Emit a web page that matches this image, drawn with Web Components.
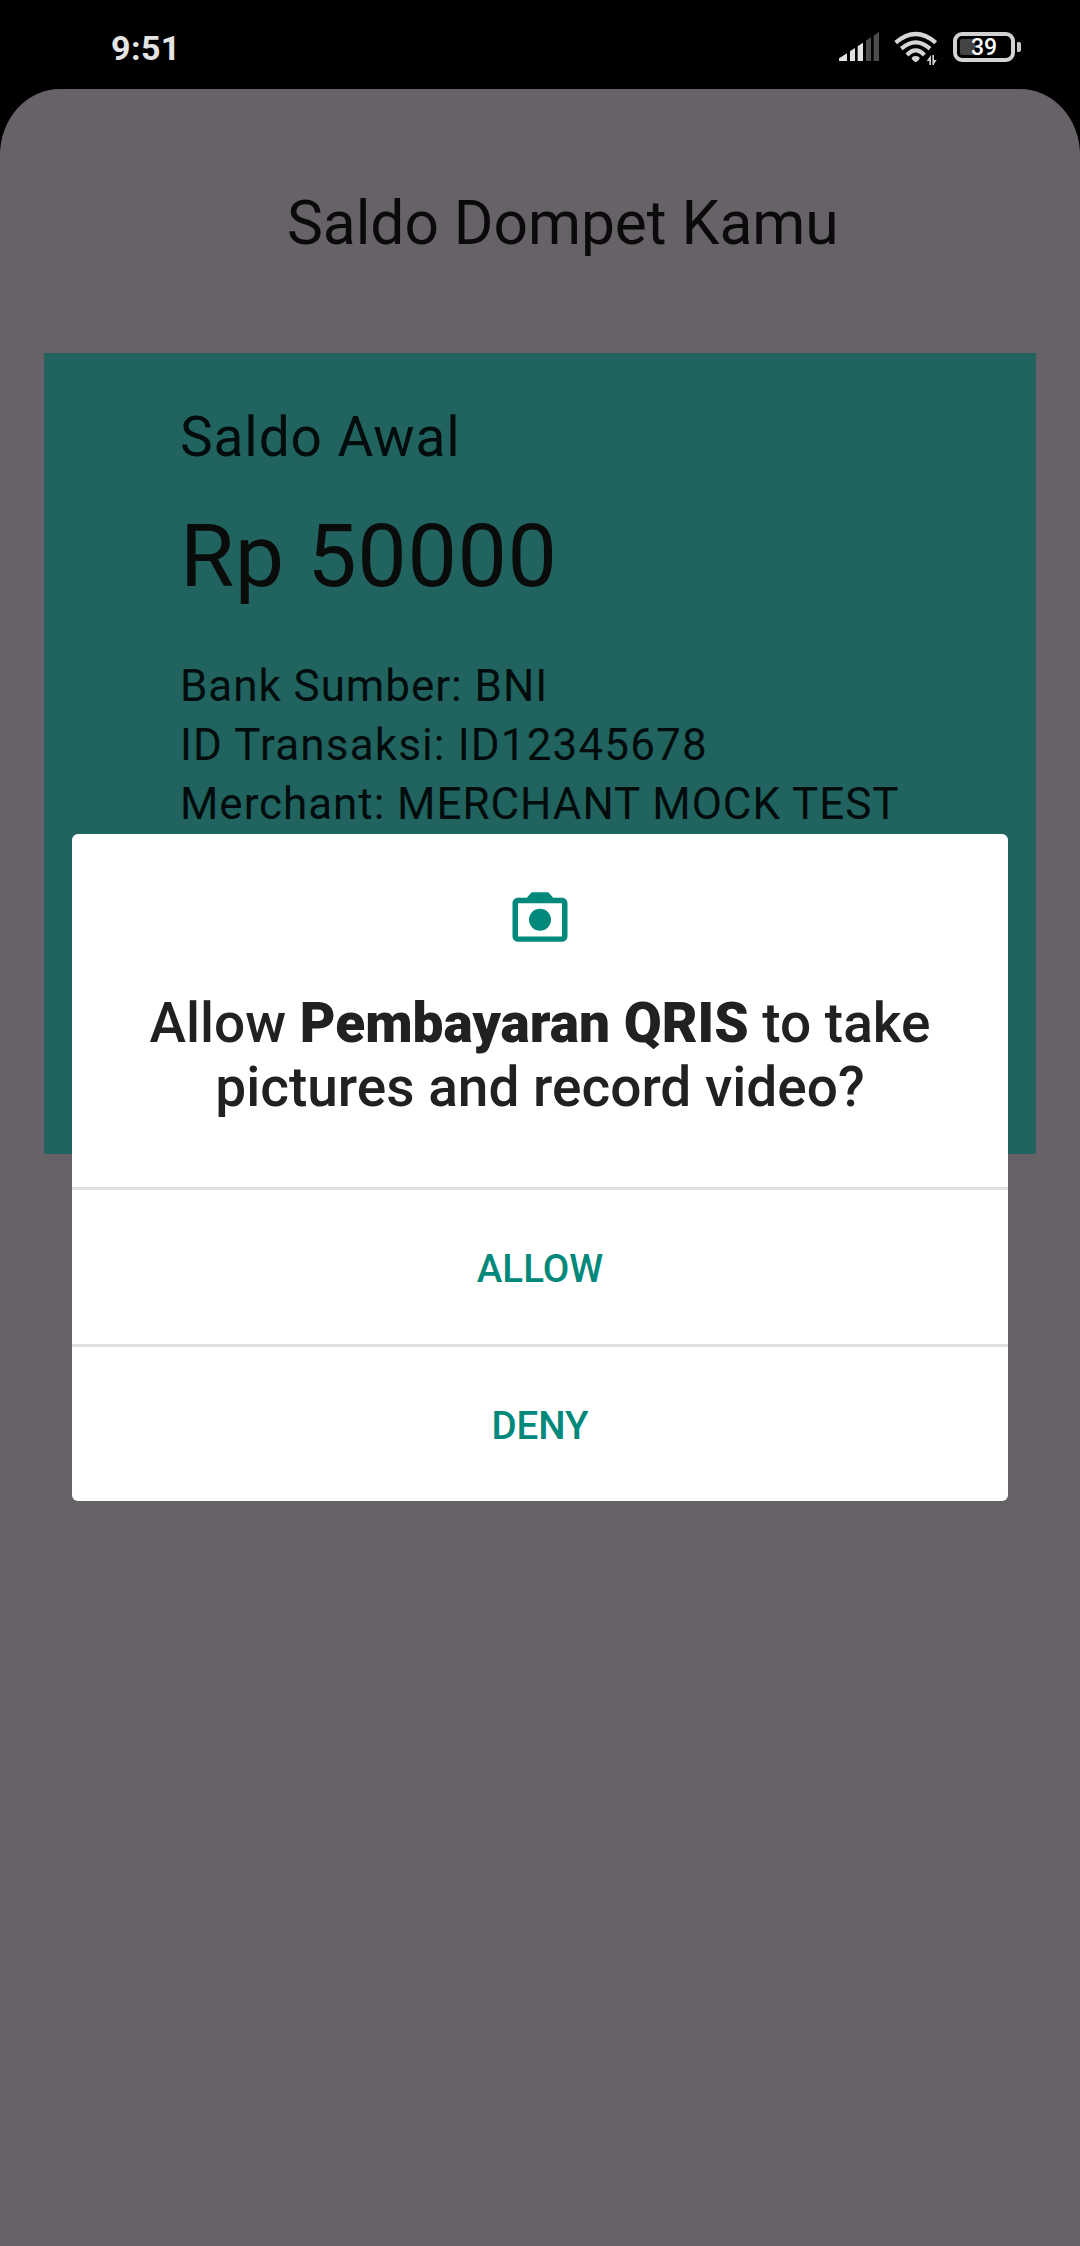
<!DOCTYPE html>
<html lang="id">
<head>
<meta charset="utf-8">
<title>Saldo Dompet Kamu</title>
<style>
html, body { margin: 0; background: #000; }
body { font-family: Roboto, "Liberation Sans", sans-serif; width: 1080px; height: 2246px; overflow: hidden; }
.code { letter-spacing: 1.14px; }
</style>
</head>
<body>
<phone-screen>
  <status-bar slot="status" time="9:51" battery="39"></status-bar>
  <app-page heading="Saldo Dompet Kamu">
    <wallet-card label="Saldo Awal" amount="Rp 50000">
      <div>Bank Sumber: BNI</div>
      <div class="code">ID Transaksi: ID12345678</div>
      <div>Merchant: MERCHANT MOCK TEST</div>
    </wallet-card>
  </app-page>
  <permission-dialog slot="overlay" app="Pembayaran QRIS">
    <dialog-action slot="actions">ALLOW</dialog-action>
    <dialog-action slot="actions">DENY</dialog-action>
  </permission-dialog>
</phone-screen>
<script>
const define = (name, render) => customElements.define(name, class extends HTMLElement {
  constructor() {
    super();
    this.attachShadow({ mode: 'open' }).innerHTML = render(this);
  }
});

define('phone-screen', () => `
<style>
:host { display: flex; flex-direction: column; position: relative; width: 1080px; height: 2246px; background: #000; overflow: hidden; }
main { flex: 1; display: flex; }
.overlay { position: absolute; left: 72px; top: 834px; width: 936px; }
</style>
<slot name="status"></slot>
<main><slot></slot></main>
<div class="overlay"><slot name="overlay"></slot></div>`);

define('status-bar', el => `
<style>
:host { display: flex; box-sizing: border-box; height: 89px; padding: 0 59px 0 111px; justify-content: space-between; color: #e4e4e4; }
.time { font-size: 34px; font-weight: 700; line-height: 40px; padding-top: 28px; letter-spacing: .4px; }
.icons { display: flex; align-items: flex-start; padding-top: 31px; }
svg { display: block; flex: none; }
.wifi { margin-left: 14px; }
.battery { display: flex; margin: 1px 0 0 16px; align-items: center; }
.shell { box-sizing: border-box; width: 62px; height: 30px; border: 4px solid #d2d2d2; border-radius: 9px; display: flex; align-items: center; position: relative; }
.level { width: 15px; height: 16px; margin-left: 3px; background: #444; border-radius: 2px 0 0 2px; }
.pct { position: absolute; inset: 0; text-align: center; font-size: 23px; line-height: 23px; font-weight: 500; color: #fff; }
.tip { width: 4px; height: 10px; margin-left: 2px; border-radius: 1px 2px 2px 1px; background: #c8c8c8; }
</style>
<div class="time">${el.getAttribute('time')}</div>
<div class="icons">
  <svg width="42" height="32" viewBox="54 48 126 96">
    <path fill="#e2e2e2" d="M57 138v-8l24-15v23zM90 138v-29l15-10v39zM113 138v-44l16-11v55z"/>
    <path fill="#4c4c4c" d="M138 138v-61l15-11v72zM161 138v-76l16-12v88z"/>
  </svg>
  <svg class="wifi" width="43" height="34" viewBox="223 48 129 102">
    <g fill="none" stroke="#d6d6d6" stroke-width="12.5">
      <path d="M228 83Q288 31 348 83"/>
      <path d="M245 101Q288 63 331 101"/>
      <path d="M262 120Q288 92 314 120"/>
    </g>
    <path fill="#d6d6d6" d="M276 131q0-8 12-8t12 8q-4 6-12 11q-8-5-12-11z"/>
    <path fill="#d0d0d0" stroke="#000" stroke-width="5" paint-order="stroke" d="M334 120v30h-5v-12h-8zM338 120h5v15h8l-8 12v3h-5z"/>
  </svg>
  <div class="battery"><div class="shell"><div class="level"></div><div class="pct">${el.getAttribute('battery')}</div></div><div class="tip"></div></div>
</div>`);

define('app-page', el => `
<style>
:host { display: block; box-sizing: border-box; flex: 1; padding: 99px 44px 0; background: #676267; border-radius: 60px 60px 0 0 / 66px 66px 0 0; }
h1 { margin: 0 0 93px; padding-left: 243px; font-size: 60.5px; font-weight: 400; line-height: 72px; letter-spacing: -.06px; color: #0b0a0b; white-space: nowrap; }
</style>
<h1>${el.getAttribute('heading')}</h1>
<slot></slot>`);

define('wallet-card', el => `
<style>
:host { display: block; box-sizing: border-box; height: 801px; padding: 52px 0 0 136px; background: #21635f; color: #030c0c; white-space: nowrap; }
.label { font-size: 55px; line-height: 64px; letter-spacing: .9px; }
.amount { font-size: 88px; line-height: 104px; margin: 35px 0 48.5px; letter-spacing: .6px; color: #0a0c0c; }
.details { font-size: 44px; line-height: 59px; letter-spacing: .94px; }
</style>
<div class="label">${el.getAttribute('label')}</div>
<div class="amount">${el.getAttribute('amount')}</div>
<div class="details"><slot></slot></div>`);

define('permission-dialog', el => `
<style>
:host { display: block; background: #fff; border-radius: 6px; overflow: hidden; color: #212121; }
.message { display: flex; flex-direction: column; align-items: center; box-sizing: border-box; height: 353px; padding-top: 50px; gap: 41px; }
svg { display: block; }
p { margin: 0; font-size: 55px; font-weight: 500; line-height: 64.4px; text-align: center; white-space: nowrap; }
b { font-weight: 900; }
</style>
<div class="message">
  <svg width="66" height="66" viewBox="0 0 24 24" fill="#00897b">
    <path fill-rule="evenodd" d="M20 5h-3.17L15 3H9L7.17 5H4c-1.1 0-2 .9-2 2v12c0 1.1.9 2 2 2h16c1.1 0 2-.9 2-2V7c0-1.1-.9-2-2-2zM20 19.1H4V7h16z"/>
    <circle cx="12" cy="13" r="4"/>
  </svg>
  <p>Allow <b>${el.getAttribute('app')}</b> to take<br>pictures and record video?</p>
</div>
<slot name="actions"></slot>`);

define('dialog-action', () => `
<style>
:host { display: block; border-top: 3px solid #e0e0e0; }
button { all: unset; display: flex; box-sizing: border-box; width: 100%; height: 154px; padding-top: 2px; align-items: center; justify-content: center; font-size: 38.5px; font-weight: 500; color: #00897b; }
</style>
<button><slot></slot></button>`);
</script>
</body>
</html>
